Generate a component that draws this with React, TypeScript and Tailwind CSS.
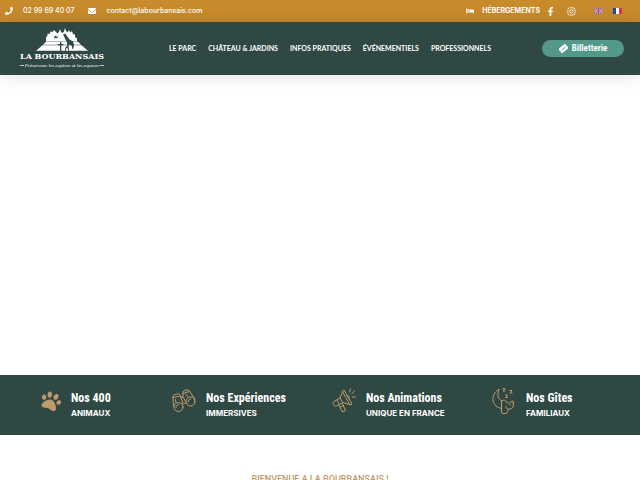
import type { ReactNode } from 'react';
import { FaPhone, FaEnvelope, FaBed, FaFacebookF, FaInstagram, FaPaw } from 'react-icons/fa';

const navItems = ['LE PARC', 'CHÂTEAU & JARDINS', 'INFOS PRATIQUES', 'ÉVÉNEMENTIELS', 'PROFESSIONNELS'];

function Logo() {
  return (
    <a href="#" className="flex flex-col items-center text-white">
      <svg viewBox="0 0 52 23" className="w-[52px] h-[23px]" fill="currentColor" aria-hidden="true">
        <path d="M10 13.500V9l1.500-1V5.500l2 .5 1-2.500 2 .5 1.500-2 2 2 1.500 1.500L23 4l1-3 1 3 1.500 1L28 3.500 29 0l1.200 3 1.300 1.500L33 2l1.200 2.500L36 3l1 3 2 .5V9l2 1.500v3z" />
        <path d="M10 13.800h32l3 3H7zM6.500 17.300h39l6.500 5.400H0z" />
        <g fill="#2f4844">
          <path d="M17.500 8l1.300.8.8-1.200 1.200 1.200 1.200-.6-.8 2h-2.500z" />
          <path d="M27 6.500l2.200-1 4.300 6 3.500 2 1 3.500-.8 4h-.8l-.7-3.500-2.700-1-.8 4h-.8l-.4-6-2.700-5.500z" />
          <path d="M24 14h1.300v2H27.500v1.300h-2.200V23H24v-5.700h-2.200V16H24z" />
          <path d="M29 22.700c0-3.400 1-4.400 2-4.400s2 1 2 4.400z" />
        </g>
        <path d="M30 22.700c0-2 .5-3 1-3s1 1 1 3z" />
      </svg>
      <span className="font-['DejaVu_Serif',serif] font-bold text-[8px] leading-[11px] whitespace-nowrap">LA BOURBANSAIS</span>
      <span className="flex w-full items-center gap-px font-['Liberation_Serif',serif] italic text-[5px] leading-[7px] whitespace-nowrap">
        <span className="h-px flex-1 bg-white/70" />
        Préservons les espèces et les espaces
        <span className="h-px flex-1 bg-white/70" />
      </span>
    </a>
  );
}

function FlagUK() {
  return (
    <svg viewBox="0 0 18 12" className="w-[9px] h-[6px]" role="img" aria-label="English">
      <path fill="#5a5a9e" d="M0 0h18v12H0z" />
      <path stroke="#ddd6df" strokeWidth="2.400" d="M0 0l18 12M18 0L0 12" />
      <path stroke="#c23b55" strokeWidth="1" d="M0 0l18 12M18 0L0 12" />
      <path stroke="#eee" strokeWidth="4" d="M9 0v12M0 6h18" />
      <path stroke="#c5304a" strokeWidth="2.400" d="M9 0v12M0 6h18" />
    </svg>
  );
}

function FlagFR() {
  return (
    <svg viewBox="0 0 9 6" className="w-[9px] h-[6px]" role="img" aria-label="Français">
      <path fill="#1d4ba8" d="M0 0h3v6H0z" />
      <path fill="#fff" d="M3 0h3v6H3z" />
      <path fill="#e0333f" d="M6 0h3v6H6z" />
    </svg>
  );
}

function Ticket() {
  return (
    <svg viewBox="0 0 16 16" className="w-[9px] h-[9px]" aria-hidden="true">
      <g transform="rotate(-40 8 8)">
        <path fill="currentColor" d="M1 3h14a1 1 0 0 1 1 1v2.300a1.800 1.800 0 0 0 0 3.400V12a1 1 0 0 1-1 1H1a1 1 0 0 1-1-1V9.700a1.800 1.800 0 0 0 0-3.400V4a1 1 0 0 1 1-1z" />
        <path fill="#53998a" d="M4.500 7.200h7v1.600h-7z" />
      </g>
    </svg>
  );
}

const stroke = { fill: 'none', stroke: 'currentColor', strokeWidth: 1, strokeLinecap: 'round', strokeLinejoin: 'round' } as const;

function Binoculars() {
  return (
    <svg viewBox="0 0 24 24" className="w-6 h-6" {...stroke} aria-hidden="true">
      <path d="M1.500 17L1 7l1.500-1.500L7 4.800l1.500 1.700.5 3 2 4M1 8.500l7.500-1.500" />
      <circle cx="6.500" cy="18" r="4.500" />
      <path d="M4 18.500c0-1.800 1-2.800 2.500-2.800" />
      <path d="M11 9V3l1-1.500L16 .8l1.500 1.500 5.500 8M11 4.500l6.500-2" />
      <circle cx="18.500" cy="12.500" r="4.500" />
      <path d="M16 13c0-1.800 1-2.800 2.500-2.800" />
      <path d="M9 8.500c1.500-1 2.500 0 3 1l1.500 3M9.500 14.500c1.500 1 3 .5 4.500-1M3.500 10.500l.5 3M14 5.500l2 2.500" />
    </svg>
  );
}

function Megaphone() {
  return (
    <svg viewBox="0 0 24 26" className="w-6 h-[26px]" {...stroke} aria-hidden="true">
      <path d="M10.500 3l1.500-1 8 14-1.500 1zM10.500 4L8 10l-6 3.500c-2 1.500 0 5.500 2.500 4.500l6.500-3.500 6.500 2M8 10l2.500 4.500M5 12l2.500 4.500" />
      <path d="M7 17.500l3.500 6.500 3-1.500-3-6.500M8.500 19l3-1.500M15 7.500c2-.5 3.500 2 2 3.500" />
      <path d="M17.500 4L18.500.8M19.500 6L22.500 3M20.500 9h3" />
    </svg>
  );
}

function MoonSleep() {
  return (
    <svg viewBox="0 0 24 28" className="w-6 h-7" {...stroke} aria-hidden="true">
      <path d="M7 2.500C-.5 5.500-1.500 17 6.500 20.500c1 .5 2 .8 3 .8M7 2.500c-2.500 5.500-.5 10.500 3 11.500" />
      <path d="M9.500 25v-10c0-2.500 4.500-2.500 5 0v.5c1.500 1 3 .5 4-.5l2.500-1 .5 3.500c0 2.500-1 4-3.500 4.500l-2 .5c0 1.500-.5 3.500-2 4h-3c-.8 0-1.500-.5-1.500-1.500z" />
      <path d="M16 22c-1.500 0-2-1-2-2.500M17.500 17.500h.5M20 17h.3" />
      <path d="M11 1.500h2l-2 2.500h2M18 3.500h2l-2 2.500h2M13.500 8h2l-2 2.500h2" />
    </svg>
  );
}

function Feature({ icon, title, label, className = 'pl-3' }: { icon: ReactNode; title: string; label: string; className?: string }) {
  return (
    <a href="#" className={`flex items-center gap-[10px] ${className}`}>
      <span className="pb-2 text-[#c09a6b]">{icon}</span>
      <span className="flex flex-col pt-px text-white whitespace-nowrap">
        <span className="font-['Liberation_Sans_Narrow','Roboto_Condensed','Liberation_Sans',sans-serif] font-bold text-[12px] leading-4">{title}</span>
        <span className="font-bold text-[8px] leading-[15px]">{label}</span>
      </span>
    </a>
  );
}

export default function App() {
  return (
    <div className="h-screen overflow-hidden bg-white font-['Inter',sans-serif]">
      {/* Contact bar */}
      <div className="flex h-[22px] items-center justify-between bg-[#c88b2b] pl-[5px] pr-[18px] text-[7px] font-medium text-white">
        <div className="flex items-center gap-[14px]">
          <a href="#" className="flex items-center gap-[10px]"><FaPhone className="w-2 h-2" /> 02 99 69 40 07</a>
          <a href="#" className="flex items-center gap-[10px]"><FaEnvelope className="w-2 h-2" /> contact@labourbansais.com</a>
        </div>
        <div className="flex items-center">
          <a href="#" className="flex items-center gap-2 font-bold"><FaBed className="w-2 h-2" /> HÉBERGEMENTS</a>
          <a href="#" aria-label="Facebook" className="ml-[6px]"><FaFacebookF className="w-[9px] h-[9px]" /></a>
          <a href="#" aria-label="Instagram" className="ml-3"><FaInstagram className="w-[9px] h-[9px]" /></a>
          <a href="#" className="ml-[18px]"><FlagUK /></a>
          <a href="#" className="ml-[10px]"><FlagFR /></a>
        </div>
      </div>

      {/* Main navigation */}
      <header className="relative flex h-[53px] items-center bg-[#2f4844] pl-5 pr-4 shadow-[0_0_15px_rgba(0,0,0,0.15)]">
        <Logo />
        <nav className="ml-auto mr-[51px] flex items-center gap-3 font-['Lato',sans-serif] text-[7px] font-bold text-white">
          {navItems.map((item) => (
            <a key={item} href="#" className="whitespace-nowrap">{item}</a>
          ))}
        </nav>
        <button className="flex h-[17px] w-[82px] items-center justify-center gap-1 rounded-full bg-[#53998a] text-white font-['Liberation_Sans_Narrow','Roboto_Condensed','Liberation_Sans',sans-serif] text-[9px] font-bold">
          <Ticket />
          Billetterie
        </button>
      </header>

      <section className="h-[300px]" />

      {/* Highlights */}
      <section className="grid h-[60px] grid-cols-4 bg-[#2f4844]">
        <Feature icon={<FaPaw className="w-5 h-5 rotate-[20deg]" />} title="Nos 400" label="ANIMAUX" className="pl-[41px]" />
        <Feature icon={<Binoculars />} title="Nos Expériences" label="IMMERSIVES" />
        <Feature icon={<Megaphone />} title="Nos Animations" label="UNIQUE EN FRANCE" />
        <Feature icon={<MoonSleep />} title="Nos Gîtes" label="FAMILIAUX" />
      </section>

      <main className="pt-[38px] text-center">
        <h1 className="font-['Roboto',sans-serif] text-[9px] leading-3 font-medium text-[#c09a6b]">BIENVENUE A LA BOURBANSAIS !</h1>
      </main>
    </div>
  );
}
